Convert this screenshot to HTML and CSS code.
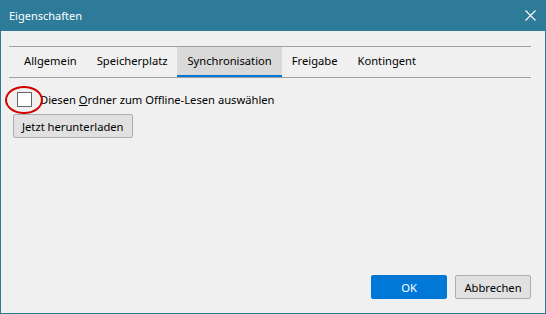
FILE: index.html
```html
<!DOCTYPE html>
<html lang="de">
<head>
    <meta charset="UTF-8">
    <meta name="viewport" content="width=device-width, initial-scale=1.0">
    <title>Eigenschaften</title>
    <link rel="stylesheet" href="styles.css">
</head>
<body>
    <div class="window">
        <div class="titlebar">
            <span class="title">Eigenschaften</span>
            <svg class="close" width="11" height="11" viewBox="0 0 11 11">
                <path d="M0.5 0.5 L10.5 10.5 M10.5 0.5 L0.5 10.5" stroke="#fff" stroke-width="1.1" fill="none"/>
            </svg>
        </div>

        <div class="content">
            <!-- Reiter -->
            <div class="tabs">
                <div class="tab">Allgemein</div>
                <div class="tab">Speicherplatz</div>
                <div class="tab selected">Synchronisation</div>
                <div class="tab">Freigabe</div>
                <div class="tab">Kontingent</div>
            </div>

            <div class="panel">
                <label class="check-row">
                    <span class="checkbox"></span>
                    <span>Diesen <u>O</u>rdner zum Offline-Lesen auswählen</span>
                    <span class="marker"></span>
                </label>
                <button class="btn"><u>J</u>etzt herunterladen</button>
            </div>

            <div class="footer">
                <button class="btn primary">OK</button>
                <button class="btn">Abbrechen</button>
            </div>
        </div>
    </div>
</body>
</html>
```

FILE: styles.css
```css
body {
    margin: 0;
    font-family: "Noto Sans", "Open Sans", sans-serif;
    font-size: 11.2px;
    color: #000;
}
.window {
    width: 546px;
    height: 314px;
    box-sizing: border-box;
    border: 1px solid #2b7a98;
    border-top: none;
    background-color: #f0f0f0;
    display: flex;
    flex-direction: column;
}
.titlebar {
    height: 31px;
    background-color: #2d7b98;
    color: #fff;
    display: flex;
    align-items: center;
    justify-content: space-between;
    padding: 0 10px 0 9px;
    margin: 0 -1px;
    flex-shrink: 0;
}
.title {
    font-size: 11px;
    margin-top: -1px;
}
.close {
    display: block;
}
.content {
    flex: 1;
    display: flex;
    flex-direction: column;
    padding: 15px 14px 14px 8px;
}
.tabs {
    display: flex;
    border-top: 1px solid #a0a0a0;
    border-bottom: 1px solid #a0a0a0;
    padding-left: 5px;
    height: 30px;
}
.tab {
    padding: 0 10px;
    line-height: 28px;
    border-bottom: 2px solid transparent;
}
.tab.selected {
    background-color: #d9d9d9;
    border-bottom-color: #0078d7;
}
.panel {
    display: flex;
    flex-direction: column;
    align-items: flex-start;
    padding: 13px 0 0 4px;
    gap: 7px;
}
.check-row {
    display: flex;
    align-items: center;
    gap: 8px;
    padding-left: 4px;
    position: relative;
    height: 16px;
}
.checkbox {
    width: 13px;
    height: 13px;
    border: 1px solid #666;
    background-color: #fff;
}
/* rote Markierung um das Kästchen */
.marker {
    position: absolute;
    left: -8px;
    top: -5px;
    width: 34px;
    height: 24px;
    border: 2px solid #d40000;
    border-radius: 50%;
}
.btn {
    font-family: inherit;
    font-size: 11.2px;
    height: 24px;
    padding: 0 8px;
    background-color: #e1e1e1;
    border: 1px solid #adadad;
    border-radius: 2px;
    color: #000;
}
.footer {
    margin-top: auto;
    display: flex;
    justify-content: flex-end;
    gap: 8px;
}
.footer .btn {
    width: 76px;
}
.btn.primary {
    background-color: #0078d7;
    border-color: #0078d7;
    color: #fff;
}
```
